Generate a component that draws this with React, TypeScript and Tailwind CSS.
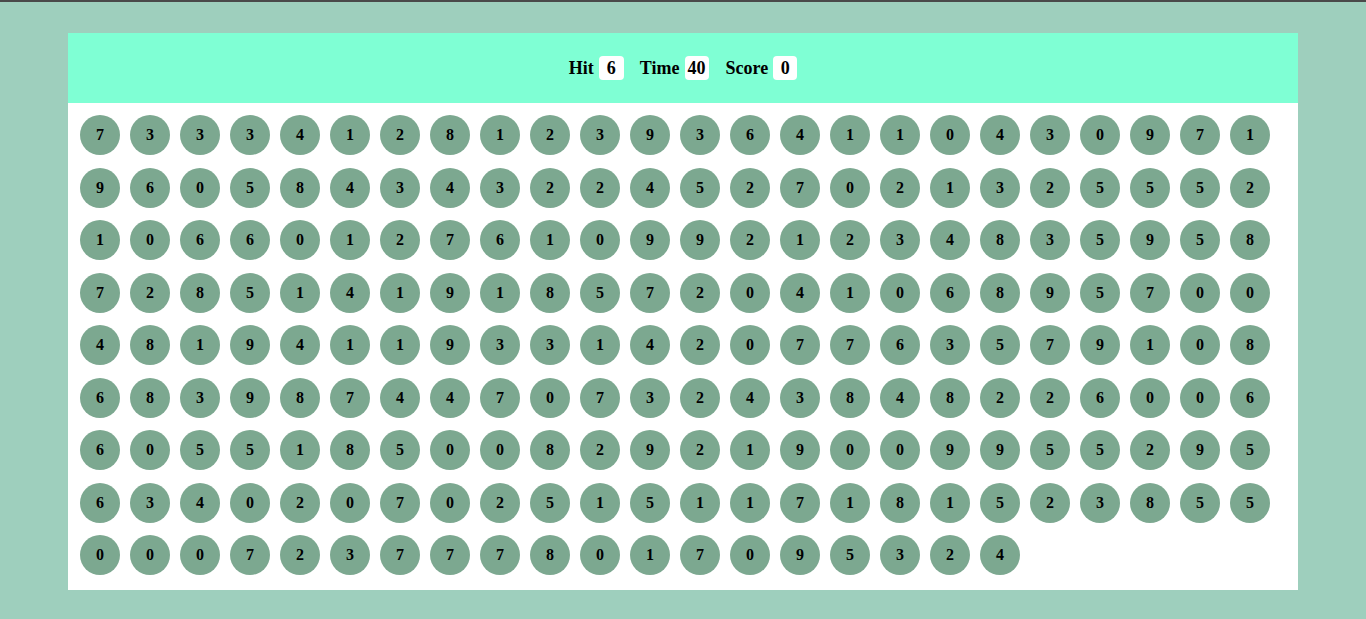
import React from "react";

const rows = [
  "733341281239364110430971",
  "960584343224527021325552",
  "106601276109921234835958",
  "728514191857204106895700",
  "481941193314207763579108",
  "683987447073243848226006",
  "605518500829219009955295",
  "634020702515117181523855",
  "0007237778017095324",
];

const nums = rows.join("").split("");

export default function App() {
  return (
    <div
      className="min-h-[619px] w-full bg-[#9ecfbd] border-t-2 border-[#4a4a4a] pt-[31px]"
      style={{ fontFamily: '"Liberation Serif", "Times New Roman", serif' }}
    >
      <div className="mx-[68px] w-[1230px] bg-white">
        <div className="h-[70px] bg-[#7fffd4] flex items-center justify-center text-[18px] font-bold text-black">
          <div className="flex items-center">
            <span>Hit</span>
            <span className="ml-[5px] w-[25px] h-[24px] bg-white rounded-[4px] flex items-center justify-center">6</span>
          </div>
          <div className="flex items-center ml-[16px]">
            <span>Time</span>
            <span className="ml-[5px] w-[24px] h-[24px] bg-white rounded-[4px] flex items-center justify-center">40</span>
          </div>
          <div className="flex items-center ml-[17px]">
            <span>Score</span>
            <span className="ml-[5px] w-[24px] h-[24px] bg-white rounded-[4px] flex items-center justify-center">0</span>
          </div>
        </div>
        <div className="pt-[12px] pl-[12px] pb-[15px] grid grid-cols-[repeat(24,40px)] gap-x-[10px] gap-y-[12.5px]">
          {nums.map((n, i) => (
            <div
              key={i}
              className="w-[40px] h-[40px] rounded-full bg-[#7ca890] flex items-center justify-center text-[16px] font-bold text-black leading-none"
            >
              {n}
            </div>
          ))}
        </div>
      </div>
    </div>
  );
}
